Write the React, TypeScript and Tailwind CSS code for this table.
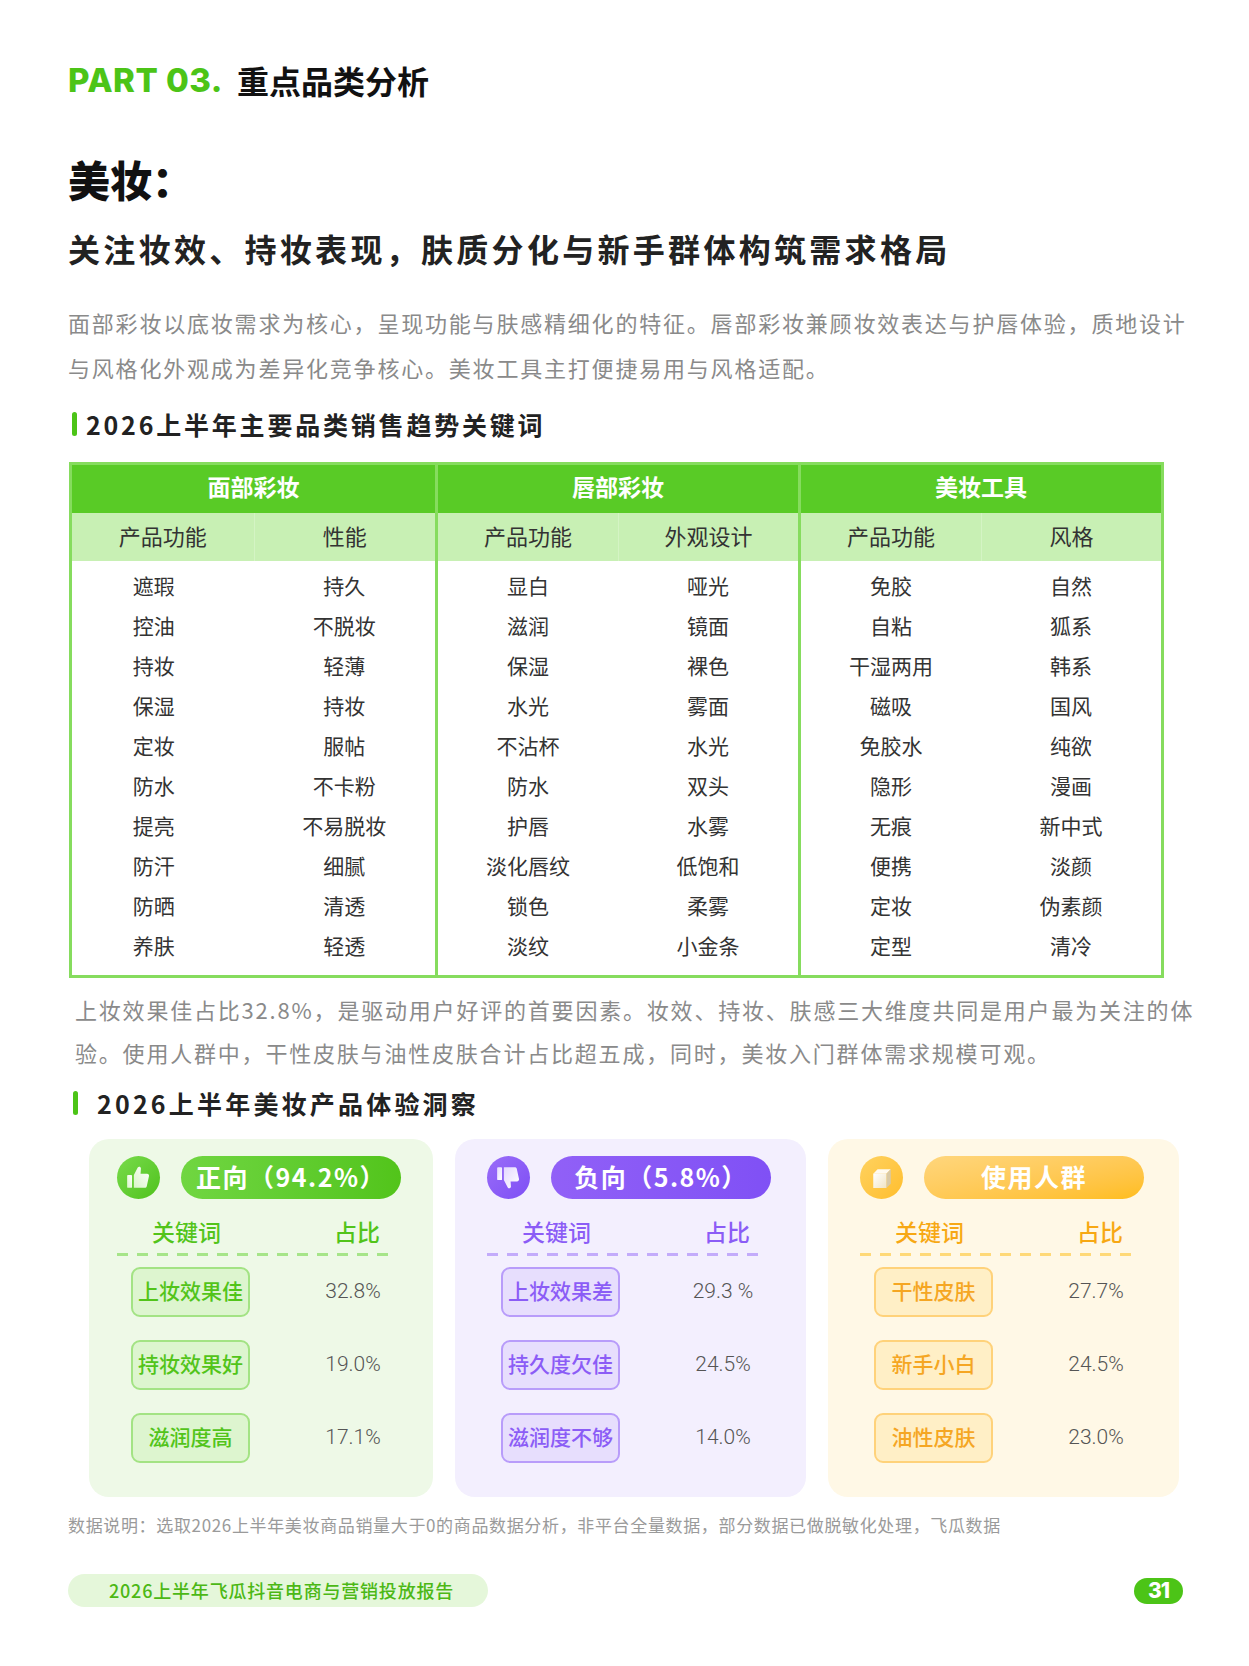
import React from 'react';

const cjk = "font-['Noto_Sans_CJK_SC','Noto_Sans',sans-serif]";

const groups = [
  {
    title: '面部彩妆',
    heads: ['产品功能', '性能'],
    first: true,
    cols: [
      ['遮瑕', '控油', '持妆', '保湿', '定妆', '防水', '提亮', '防汗', '防晒', '养肤'],
      ['持久', '不脱妆', '轻薄', '持妆', '服帖', '不卡粉', '不易脱妆', '细腻', '清透', '轻透'],
    ],
  },
  {
    title: '唇部彩妆',
    heads: ['产品功能', '外观设计'],
    first: false,
    cols: [
      ['显白', '滋润', '保湿', '水光', '不沾杯', '防水', '护唇', '淡化唇纹', '锁色', '淡纹'],
      ['哑光', '镜面', '裸色', '雾面', '水光', '双头', '水雾', '低饱和', '柔雾', '小金条'],
    ],
  },
  {
    title: '美妆工具',
    heads: ['产品功能', '风格'],
    first: false,
    cols: [
      ['免胶', '自粘', '干湿两用', '磁吸', '免胶水', '隐形', '无痕', '便携', '定妆', '定型'],
      ['自然', '狐系', '韩系', '国风', '纯欲', '漫画', '新中式', '淡颜', '伪素颜', '清冷'],
    ],
  },
];

function ThumbUp({ id, down }: { id: string; down?: boolean }) {
  return (
    <svg width="31" height="31" viewBox="0 0 24 24">
      <defs>
        <linearGradient id={id} x1="1" y1="0" x2="0" y2="1">
          <stop offset="0" stopColor="#ffffff" />
          <stop offset="1" stopColor={down ? '#e4d8ff' : '#d9f5c8'} />
        </linearGradient>
      </defs>
      <g transform={down ? 'matrix(1 0 0 -1 0 24)' : undefined}>
        <rect x="3.2" y="10" width="3.8" height="10" rx="0.7" fill={`url(#${id})`} />
        <path
          d="M8.4 10 L11.4 4.3 C12 3.2 13.9 3.5 13.9 5 L13.6 9 H18.6 C19.7 9 20.4 10 20.1 11.1 L18.4 18.8 C18.2 19.6 17.6 20 16.9 20 H8.4 Z"
          fill={`url(#${id})`}
        />
      </g>
    </svg>
  );
}

function Cube() {
  return (
    <svg width="30" height="30" viewBox="0 0 24 24">
      <defs>
        <linearGradient id="cubeFront" x1="0" y1="0" x2="1" y2="1">
          <stop offset="0" stopColor="#ffffff" />
          <stop offset="1" stopColor="#f1e4c4" />
        </linearGradient>
      </defs>
      <path d="M5 8.5 L8.5 5 H19 L15.5 8.5 Z" fill="#fffaf0" />
      <path d="M15.5 8.5 L19 5 V16.5 L15.5 20 Z" fill="#d9c9a6" />
      <rect x="5" y="8.5" width="10.5" height="11.5" fill="url(#cubeFront)" />
    </svg>
  );
}

const cards = [
  {
    width: 'w-[344px]',
    pad: 'pl-[28px]',
    bg: 'bg-[#eef9e7]',
    circle: 'bg-linear-to-br from-[#78db4a] to-[#4fc218]',
    pill: 'bg-linear-to-r from-[#70d641] to-[#52c41a]',
    label: 'text-[#52c41a]',
    dash: '#a6e589',
    kw: 'bg-[#ddf5cf] border-[#a3e384] text-[#52c41a]',
    title: '正向（94.2%）',
    icon: <ThumbUp id="tu" />,
    rows: [
      ['上妆效果佳', '32.8%'],
      ['持妆效果好', '19.0%'],
      ['滋润度高', '17.1%'],
    ],
  },
  {
    width: 'w-[351px]',
    pad: 'pl-[32px]',
    bg: 'bg-[#f3effe]',
    circle: 'bg-linear-to-br from-[#9a6cf8] to-[#7e4ef5]',
    pill: 'bg-linear-to-r from-[#9160f7] to-[#8050f5]',
    label: 'text-[#8b5cf6]',
    dash: '#c3abfb',
    kw: 'bg-[#e7defd] border-[#b89cfa] text-[#8b5cf6]',
    title: '负向（5.8%）',
    icon: <ThumbUp id="td" down />,
    rows: [
      ['上妆效果差', '29.3 %'],
      ['持久度欠佳', '24.5%'],
      ['滋润度不够', '14.0%'],
    ],
  },
  {
    width: 'w-[351px]',
    pad: 'pl-[32px]',
    bg: 'bg-[#fff8e6]',
    circle: 'bg-linear-to-br from-[#ffd25e] to-[#ffbe2a]',
    pill: 'bg-linear-to-br from-[#ffd67c] to-[#ffbd18]',
    label: 'text-[#f7a814]',
    dash: '#ffd978',
    kw: 'bg-[#ffefc6] border-[#ffd27a] text-[#f5a623]',
    title: '使用人群',
    icon: <Cube />,
    rows: [
      ['干性皮肤', '27.7%'],
      ['新手小白', '24.5%'],
      ['油性皮肤', '23.0%'],
    ],
  },
];

export default function App() {
  return (
    <div className={`w-[1249px] h-[1666px] bg-white pl-[68px] ${cjk} text-[#222]`}>
      {/* page title */}
      <div className="pt-[60px] h-[100px] flex items-center gap-[14px]">
        <span className="font-['Inter',sans-serif] font-extrabold text-[33px] leading-[40px] text-[#4cc417] tracking-[0.5px]">
          PART 03.
        </span>
        <span className="font-bold text-[32px] leading-[40px] text-[#111]">重点品类分析</span>
      </div>

      <h1 className="mt-[54px] text-[42px] leading-[50px] font-black text-[#111]">美妆：</h1>
      <h2 className="mt-[24px] text-[32px] leading-[40px] font-bold tracking-[3.3px] text-[#222]">
        关注妆效、持妆表现，肤质分化与新手群体构筑需求格局
      </h2>

      <p className="mt-[32px] text-[22px] leading-[45px] tracking-[1.8px] text-[#8a8a8a] whitespace-nowrap">
        面部彩妆以底妆需求为核心，呈现功能与肤感精细化的特征。唇部彩妆兼顾妆效表达与护唇体验，质地设计
        <br />
        与风格化外观成为差异化竞争核心。美妆工具主打便捷易用与风格适配。
      </p>

      <div className="mt-[19px] h-[30px] flex items-center pl-[4px]">
        <span className="w-[5px] h-[24px] rounded-full bg-[#4cc417]" />
        <span className="ml-[9px] text-[25px] leading-[30px] font-bold tracking-[2.8px] text-[#222]">
          2026上半年主要品类销售趋势关键词
        </span>
      </div>

      {/* keyword table */}
      <div className="mt-[23px] ml-[1px] w-[1095px] border-[3px] border-[#86dc5e] grid grid-cols-3">
        {groups.map((g, gi) => (
          <div key={g.title} className={gi > 0 ? 'border-l-[3px] border-[#86dc5e]' : ''}>
            <div className="h-[48px] pb-[5px] bg-[#59cb26] flex items-center justify-center text-white text-[23px] font-bold">
              {g.title}
            </div>
            <div className="h-[48px] bg-[#c8f0b4] grid grid-cols-2 text-[22px] text-[#333]">
              {g.heads.map((h, hi) => (
                <div
                  key={h}
                  className={`flex items-center justify-center pb-[4px] ${hi > 0 ? 'border-l border-[#d4f4c4]' : ''}`}
                >
                  {h}
                </div>
              ))}
            </div>
            <div className="grid grid-cols-2 pt-[5px] pb-[9px] text-[21px] text-[#333]">
              {g.cols.map((col, ci) => (
                <div key={ci} className={g.first && ci === 0 ? 'pr-[18px]' : ''}>
                  {col.map((w, wi) => (
                    <div key={wi} className="h-[40px] flex items-center justify-center">
                      {w}
                    </div>
                  ))}
                </div>
              ))}
            </div>
          </div>
        ))}
      </div>

      <p className="mt-[10px] ml-[7px] text-[22px] leading-[43px] tracking-[1.8px] text-[#8a8a8a] whitespace-nowrap">
        上妆效果佳占比32.8%，是驱动用户好评的首要因素。妆效、持妆、肤感三大维度共同是用户最为关注的体
        <br />
        验。使用人群中，干性皮肤与油性皮肤合计占比超五成，同时，美妆入门群体需求规模可观。
      </p>

      <div className="mt-[14px] h-[30px] flex items-center pl-[5px]">
        <span className="w-[5px] h-[24px] rounded-full bg-[#4cc417]" />
        <span className="ml-[19px] text-[25px] leading-[30px] font-bold tracking-[3.2px] text-[#222]">
          2026上半年美妆产品体验洞察
        </span>
      </div>

      {/* insight cards */}
      <div className="mt-[21px] ml-[21px] flex gap-[22px]">
        {cards.map((c) => (
          <div key={c.title} className={`${c.width} h-[358px] rounded-[20px] ${c.bg} pt-[17px] ${c.pad}`}>
            <div className="flex items-center">
              <div className={`w-[43px] h-[43px] rounded-full ${c.circle} flex items-center justify-center`}>
                {c.icon}
              </div>
              <div
                className={`ml-[21px] w-[220px] h-[43px] pb-[2px] rounded-full ${c.pill} flex items-center justify-center text-white text-[25px] font-bold tracking-[1.5px]`}
              >
                {c.title}
              </div>
            </div>
            <div className={`mt-[17px] h-[30px] flex items-center text-[23px] font-medium ${c.label}`}>
              <span className="ml-[10px] w-[119px] text-center">关键词</span>
              <span className="ml-[61px] w-[100px] text-center">占比</span>
            </div>
            <svg className="mt-[7px] block" width="280" height="3">
              <line x1="0" y1="1.5" x2="280" y2="1.5" stroke={c.dash} strokeWidth="3" strokeDasharray="11 9" />
            </svg>
            <div className="mt-[11px] flex flex-col gap-[23px]">
              {c.rows.map(([k, v]) => (
                <div key={k} className="flex items-center">
                  <div
                    className={`ml-[14px] w-[119px] h-[50px] pb-[2px] rounded-[9px] border-2 ${c.kw} flex items-center justify-center text-[21px] font-medium`}
                  >
                    {k}
                  </div>
                  <div className="ml-[53px] w-[100px] text-center font-['Roboto',sans-serif] font-light text-[21px] text-[#555]">
                    {v}
                  </div>
                </div>
              ))}
            </div>
          </div>
        ))}
      </div>

      <p className="mt-[17px] text-[17px] leading-[22px] tracking-[0.65px] text-[#9a9a9a] whitespace-nowrap">
        数据说明：选取2026上半年美妆商品销量大于0的商品数据分析，非平台全量数据，部分数据已做脱敏化处理，飞瓜数据
      </p>

      {/* footer */}
      <div className="mt-[38px] flex items-center pr-[66px]">
        <div className="w-[420px] h-[33px] rounded-full bg-[#e5f7da] flex items-center pl-[41px] text-[18px] font-medium tracking-[0.8px] text-[#4cb815]">
          2026上半年飞瓜抖音电商与营销投放报告
        </div>
        <div className="ml-auto w-[49px] h-[26px] rounded-full bg-[#4cc417] flex items-center justify-center text-white font-['Inter',sans-serif] font-extrabold text-[21px] leading-none tracking-[-1px]">
          31
        </div>
      </div>
    </div>
  );
}
